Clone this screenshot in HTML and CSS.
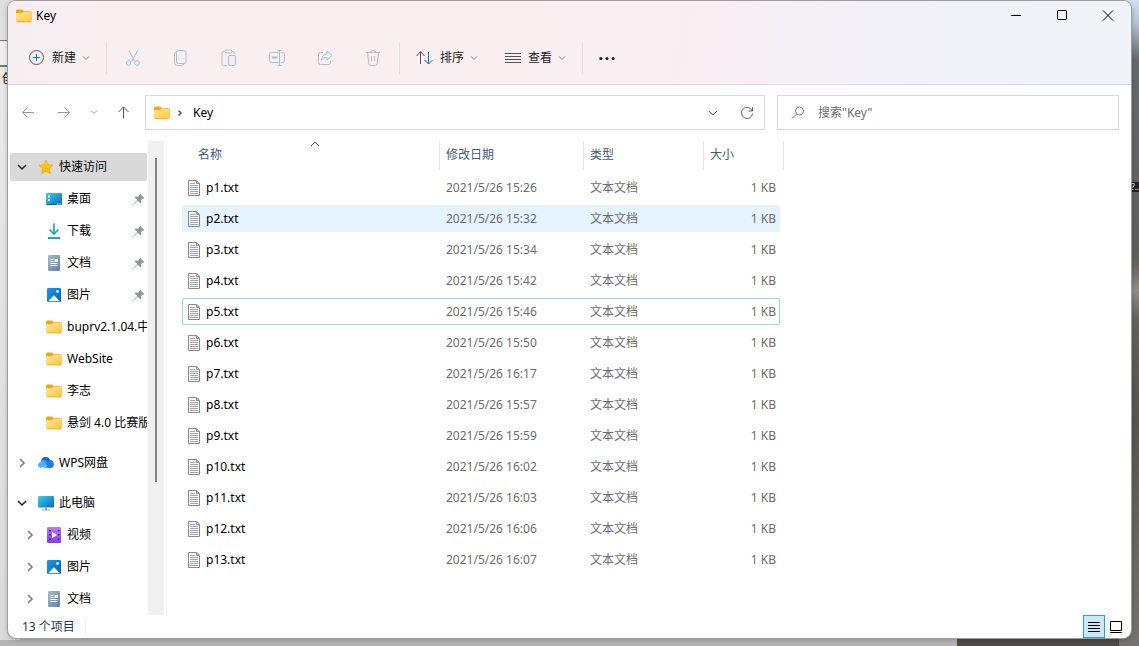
FILE: index.html
```html
<!DOCTYPE html>
<html lang="zh-CN">
<head>
<meta charset="utf-8">
<title>Key</title>
<link rel="stylesheet" href="styles.css">
</head>
<body>
<svg class="sprite" aria-hidden="true">
  <defs>
    <linearGradient id="g-folder" x1="0" y1="0" x2="1" y2="1"><stop offset="0" stop-color="#ffe69a"/><stop offset="1" stop-color="#ffc93c"/></linearGradient>
    <linearGradient id="g-screen" x1="0" y1="0" x2="1" y2="1"><stop offset="0" stop-color="#36d3ea"/><stop offset="1" stop-color="#0c66bd"/></linearGradient>
    <linearGradient id="g-star" x1="0" y1="0" x2="0" y2="1"><stop offset="0" stop-color="#ffd21f"/><stop offset="1" stop-color="#f9b806"/></linearGradient>
    <linearGradient id="g-down" x1="0" y1="0" x2="0" y2="1"><stop offset="0" stop-color="#2bc79a"/><stop offset="1" stop-color="#0b9a8a"/></linearGradient>
    <linearGradient id="g-doc" x1="0" y1="0" x2="1" y2="1"><stop offset="0" stop-color="#a9bccf"/><stop offset="1" stop-color="#64809f"/></linearGradient>
    <linearGradient id="g-pic" x1="0" y1="0" x2="1" y2="1"><stop offset="0" stop-color="#1c9de6"/><stop offset="1" stop-color="#0560b5"/></linearGradient>
    <linearGradient id="g-video" x1="0" y1="0" x2="0" y2="1"><stop offset="0" stop-color="#b57bf2"/><stop offset="1" stop-color="#8a3fe0"/></linearGradient>
  </defs>
  <symbol id="folder" viewBox="0 0 16 16"><path d="M0 3q0-1.500 1.500-1.500h4q.7 0 1.200.5l1.300 1.200h6.500q1.500 0 1.500 1.500V8H0z" fill="#f2aa0c"/><path d="M0 6q0-1 1-1h5l1.500-1.300h7q1.500 0 1.500 1.300v7q0 1-1 1H1q-1 0-1-1z" fill="url(#g-folder)"/><path d="M.3 13.300q.2.900 1 .9h13.400q.8 0 1-.9z" fill="#e5a013"/></symbol>
  <symbol id="chev" viewBox="0 0 8 8"><path d="M1 2.500l3 3 3-3" fill="none" stroke="currentColor"/></symbol>
  <symbol id="chev-down" viewBox="0 0 10 10"><path d="M1 3l4 4 4-4" fill="none" stroke="currentColor" stroke-width="1.500"/></symbol>
  <symbol id="chev-right" viewBox="0 0 10 10"><path d="M3 1l4 4-4 4" fill="none" stroke="currentColor" stroke-width="1.500"/></symbol>
  <symbol id="crumb-right" viewBox="0 0 10 10"><path d="M3.500 2.500L6 5 3.500 7.500" fill="none" stroke="currentColor" stroke-width="1.500"/></symbol>
  <symbol id="star" viewBox="0 0 16 16"><path d="M8 1.200l2.100 4.500 4.900.6-3.600 3.400.9 4.900L8 12.200l-4.300 2.400.9-4.900L1 6.300l4.900-.6z" fill="url(#g-star)" stroke="#f5a80a" stroke-width=".8" stroke-linejoin="round"/></symbol>
  <symbol id="desktop" viewBox="0 0 16 16"><rect y="2" width="16" height="12" rx="1" fill="url(#g-screen)"/><path d="M2 4.500h2v2H2zM2 8h2v2H2z" fill="#e9fbff"/><path d="M1 13h9v1H1z" fill="#0d5aa8"/><path d="M11 12.500h1.500v1H11zM13.300 12.500h1.500v1h-1.500z" fill="#c7eaff"/></symbol>
  <symbol id="download" viewBox="0 0 16 16"><path d="M8 .5v10M3.500 6.500L8 11l4.500-4.500" fill="none" stroke="#16b095" stroke-width="1.700"/><path d="M2 14h12v2H2z" fill="url(#g-down)"/></symbol>
  <symbol id="document" viewBox="0 0 16 16"><rect x="2" width="12" height="16" rx="1.200" fill="url(#g-doc)"/><path d="M4.500 4.500h3M4.500 6.500h3M4.500 8.500h7M4.500 10.500h7" stroke="#fff"/><rect x="8.500" y="4" width="3.300" height="3" fill="#fff"/></symbol>
  <symbol id="picture" viewBox="0 0 16 16"><rect x="1" y="1" width="14" height="14" rx="1.200" fill="url(#g-pic)"/><path d="M2 14.300L7.200 9q.8-.8 1.600 0l5.200 5.300z" fill="#f5faff"/><circle cx="11.500" cy="4.500" r="1.400" fill="#d9f3ff"/></symbol>
  <symbol id="video" viewBox="0 0 16 16"><rect x="1" width="14" height="16" rx="1.200" fill="url(#g-video)"/><path d="M3 3h2v1.500H3zM3 7h2v1.500H3zM3 11.500h2V13H3zM12 3h1.500v1.500H12zM12 7h1.500v1.500H12zM12 11.500h1.500V13H12z" fill="#4d2087"/><path d="M6 4.700v6.600L11 8z" fill="#fff"/></symbol>
  <symbol id="pc" viewBox="0 0 16 16"><rect y="1" width="16" height="11.500" rx=".8" fill="url(#g-screen)"/><path d="M7 12.500h2V15H7zM4 14.500h8v1H4z" fill="#94a4b0"/></symbol>
  <symbol id="cloud" viewBox="0 0 16 16"><path d="M3 6a4.800 4.800 0 0 1 9.300-.6L8 10z" fill="#1465e0"/><path d="M2.800 5.200Q6 3.800 8.500 6.500l4.800 6.500H5z" fill="#35a2ff"/><path d="M11 5.200a4 4 0 0 1 1.500 8q-1.800-.3-5.300-3.400z" fill="#1e7af3"/><path d="M3.500 6.500Q.3 7 0 10.300.3 13 3 13.200q2-.2 5.500-3.400Q6 6.500 3.500 6.500z" fill="#4bb2ff"/><path d="M3 13.200q3.300-.1 5.700-3" fill="none" stroke="#fff" stroke-width=".7"/></symbol>
  <symbol id="pin" viewBox="0 0 12 12"><path d="M7 .5L11.500 5l-1 .5-.7-.1-1.700 1.900.2 2.200-.9.900L4.700 7.700.8 11.400l-.5.100.1-.6 3.900-3.900L1.700 4.300l.9-.9 2.400.2 1.800-1.600L6.500 1z" fill="#8c98a2"/></symbol>
  <symbol id="txt" viewBox="0 0 12 16"><path d="M.5.500h8l3 3v12H.5z" fill="#fafafa" stroke="#888"/><path d="M8.500.5v3h3" fill="none" stroke="#888"/><path d="M2 3.500h5M2 5.500h8M2 7.500h8M2 9.500h8M2 11.500h8M2 13.500h8" stroke="#a5a5a5"/></symbol>
</svg>
<div class="wall-side"><span class="peek-left">创</span></div>
<div class="wall-side wall-right"><span class="peek-right">?..</span></div>

<main class="window">
  <header class="chrome">
    <div class="titlebar">
      <svg class="i16"><use href="#folder"/></svg>
      <span class="title">Key</span>
      <button class="winbtn" aria-label="最小化"><svg class="i12" viewBox="0 0 12 12"><path d="M1 5.500h10"/></svg></button>
      <button class="winbtn" aria-label="最大化"><svg class="i12" viewBox="0 0 12 12"><rect x="1.500" y=".5" width="9" height="9" rx=".6"/></svg></button>
      <button class="winbtn" aria-label="关闭"><svg class="i12" viewBox="0 0 12 12"><path d="M1 .5l10 10M11 .5L1 10.500"/></svg></button>
    </div>
    <div class="toolbar">
      <button class="cmd"><svg class="i18" viewBox="0 0 18 18"><circle cx="8.500" cy="8.500" r="7" stroke="#5a5a5a"/><path d="M5 8.500h7M8.500 5v7" stroke="#0078d4"/></svg>新建<svg class="i8"><use href="#chev"/></svg></button>
      <span class="sep"></span>
      <div class="tools">
        <button class="tool" aria-label="剪切" disabled><svg class="i18" viewBox="0 0 18 18"><path d="M5 1.500l5.700 11M13.500 1.500l-5.700 11"/><circle class="blue" cx="4.500" cy="14" r="2.300"/><circle class="blue" cx="13" cy="14" r="2.300"/></svg></button>
        <button class="tool" aria-label="复制" disabled><svg class="i18" viewBox="0 0 18 18"><path d="M4 3Q2.500 3.500 2.500 5v8.500q0 3 3 3h4q1.800 0 2.300-1.500"/><rect class="blue" x="4.500" y="1.500" width="9.500" height="13" rx="2"/></svg></button>
        <button class="tool" aria-label="粘贴" disabled><svg class="i18" viewBox="0 0 18 18"><path d="M5 2.500H3.500q-1.500 0-1.500 1.500v11q0 1.500 1.500 1.500H7M12 2.500h1Q14.500 2.500 14.500 4.500"/><rect x="5" y="1" width="7" height="3" rx="1.500"/><rect class="blue" x="8.500" y="6.500" width="7" height="10" rx="1.300"/></svg></button>
        <button class="tool" aria-label="重命名" disabled><svg class="i18" viewBox="0 0 18 18"><path d="M10.500 3.500H3.500q-2 0-2 2v6q0 2 2 2h7M13 3.500q3.500-.3 3.500 2v6q0 2.300-3.500 2"/><path class="blue" d="M9.500 1.500h4M9.500 16.500h4M11.500 1.500v15"/><path class="blue" d="M4 8.500h5.500" stroke-width="2"/></svg></button>
        <button class="tool" aria-label="共享" disabled><svg class="i18" viewBox="0 0 18 18"><path d="M7 3.500H4.500q-2 0-2 2v8q0 2 2 2h8q2 0 2-2V12"/><path class="blue" d="M11 2l5 4.500-5 4.500V8.500q-3.500-.3-5.500 2.500.5-5.500 5.500-6z"/></svg></button>
        <button class="tool" aria-label="删除" disabled><svg class="i18" viewBox="0 0 18 18"><path d="M2 3.500h14M6.500 3.500q0-2 2.500-2t2.500 2M3.500 3.500l1.300 11.200q.2 1.800 2 1.800h4.400q1.800 0 2-1.800L14.500 3.500M7.500 7v5.500M10.500 7v5.500"/></svg></button>
      </div>
      <span class="sep"></span>
      <button class="cmd"><svg class="i18" viewBox="0 0 18 18"><path d="M4.500 15V3M.5 7l4-4.500 4 4.500" stroke="#555"/><path d="M12.500 3v12M8.500 11l4 4 4-4" stroke="#0078d4"/></svg>排序<svg class="i8"><use href="#chev"/></svg></button>
      <button class="cmd"><svg class="i18" viewBox="0 0 18 18"><path d="M1 4.500h16M1 7.500h16M1 10.500h16M1 13.500h16" stroke="#555"/></svg>查看<svg class="i8"><use href="#chev"/></svg></button>
      <span class="sep"></span>
      <button class="cmd" aria-label="查看更多"><svg class="i18" viewBox="0 0 18 18"><g fill="#1b1b1b" stroke="none"><circle cx="1.800" cy="9.500" r="1.500"/><circle cx="8" cy="9.500" r="1.500"/><circle cx="14.200" cy="9.500" r="1.500"/></g></svg></button>
    </div>
  </header>

  <nav class="navbar" aria-label="导航">
    <button class="navbtn" aria-label="返回"><svg class="i14" viewBox="0 0 14 14"><path d="M13 6.500H1.500M6.500 1.500l-5 5 5 5"/></svg></button>
    <button class="navbtn" aria-label="前进"><svg class="i14" viewBox="0 0 14 14"><path d="M1 6.500h11.500M7.500 1.500l5 5-5 5"/></svg></button>
    <button class="navbtn slim" aria-label="最近浏览的位置"><svg class="i8" viewBox="0 0 8 8"><path d="M1 1.500l3 3 3-3"/></svg></button>
    <button class="navbtn dark" aria-label="上移"><svg class="i14" viewBox="0 0 14 14"><path d="M6.500 12.500V1M1.500 6l5-5 5 5"/></svg></button>
    <div class="address">
      <svg class="i16"><use href="#folder"/></svg>
      <svg class="i10 crumb-chev"><use href="#crumb-right"/></svg>
      <a class="crumb" href="#">Key</a>
      <button class="addrbtn" aria-label="以前的位置"><svg class="i10" viewBox="0 0 10 10"><path d="M1 3l4 4 4-4"/></svg></button>
      <button class="addrbtn" aria-label="刷新"><svg class="i14" viewBox="0 0 14 14"><path d="M12.300 5a5.600 5.600 0 1 0 .3 2.500M12.500 1v4h-4"/></svg></button>
    </div>
    <label class="search">
      <svg class="i14" viewBox="0 0 14 14"><circle cx="8.500" cy="5" r="4"/><path d="M5.600 7.900L1 12.500"/></svg>
      <input type="text" aria-label="搜索" placeholder="搜索&quot;Key&quot;">
    </label>
  </nav>

  <div class="content">
    <aside class="sidebar">
      <div class="tree">
        <section class="group">
          <a class="node root selected" href="#"><svg class="i10 open"><use href="#chev-down"/></svg><svg class="i16"><use href="#star"/></svg><span>快速访问</span></a>
          <a class="node" href="#"><i class="i10"></i><svg class="i16"><use href="#desktop"/></svg><span>桌面</span><svg class="i12"><use href="#pin"/></svg></a>
          <a class="node" href="#"><i class="i10"></i><svg class="i16"><use href="#download"/></svg><span>下载</span><svg class="i12"><use href="#pin"/></svg></a>
          <a class="node" href="#"><i class="i10"></i><svg class="i16"><use href="#document"/></svg><span>文档</span><svg class="i12"><use href="#pin"/></svg></a>
          <a class="node" href="#"><i class="i10"></i><svg class="i16"><use href="#picture"/></svg><span>图片</span><svg class="i12"><use href="#pin"/></svg></a>
          <a class="node" href="#"><i class="i10"></i><svg class="i16"><use href="#folder"/></svg><span>buprv2.1.04.中</span></a>
          <a class="node" href="#"><i class="i10"></i><svg class="i16"><use href="#folder"/></svg><span>WebSite</span></a>
          <a class="node" href="#"><i class="i10"></i><svg class="i16"><use href="#folder"/></svg><span>李志</span></a>
          <a class="node" href="#"><i class="i10"></i><svg class="i16"><use href="#folder"/></svg><span>悬剑 4.0 比赛版</span></a>
        </section>
        <section class="group">
          <a class="node root" href="#"><svg class="i10"><use href="#chev-right"/></svg><svg class="i16"><use href="#cloud"/></svg><span>WPS网盘</span></a>
        </section>
        <section class="group">
          <a class="node root" href="#"><svg class="i10 open"><use href="#chev-down"/></svg><svg class="i16"><use href="#pc"/></svg><span>此电脑</span></a>
          <a class="node" href="#"><svg class="i10"><use href="#chev-right"/></svg><svg class="i16"><use href="#video"/></svg><span>视频</span></a>
          <a class="node" href="#"><svg class="i10"><use href="#chev-right"/></svg><svg class="i16"><use href="#picture"/></svg><span>图片</span></a>
          <a class="node" href="#"><svg class="i10"><use href="#chev-right"/></svg><svg class="i16"><use href="#document"/></svg><span>文档</span></a>
        </section>
      </div>
      <div class="track"><div class="thumb"></div></div>
    </aside>

    <section class="files">
      <table>
        <colgroup><col class="c-name"><col class="c-date"><col class="c-type"><col class="c-size"><col class="c-end"></colgroup>
        <thead>
          <tr><th class="sorted">名称<svg class="i10 caret" viewBox="0 0 10 10"><path d="M1 7l4-4 4 4"/></svg></th><th>修改日期</th><th>类型</th><th colspan="2">大小</th></tr>
        </thead>
        <tbody>
          <tr><td><svg class="file"><use href="#txt"/></svg>p1.txt</td><td>2021/5/26 15:26</td><td>文本文档</td><td>1 KB</td></tr>
          <tr class="hover"><td><svg class="file"><use href="#txt"/></svg>p2.txt</td><td>2021/5/26 15:32</td><td>文本文档</td><td>1 KB</td></tr>
          <tr><td><svg class="file"><use href="#txt"/></svg>p3.txt</td><td>2021/5/26 15:34</td><td>文本文档</td><td>1 KB</td></tr>
          <tr><td><svg class="file"><use href="#txt"/></svg>p4.txt</td><td>2021/5/26 15:42</td><td>文本文档</td><td>1 KB</td></tr>
          <tr class="focus"><td><svg class="file"><use href="#txt"/></svg>p5.txt</td><td>2021/5/26 15:46</td><td>文本文档</td><td>1 KB</td></tr>
          <tr><td><svg class="file"><use href="#txt"/></svg>p6.txt</td><td>2021/5/26 15:50</td><td>文本文档</td><td>1 KB</td></tr>
          <tr><td><svg class="file"><use href="#txt"/></svg>p7.txt</td><td>2021/5/26 16:17</td><td>文本文档</td><td>1 KB</td></tr>
          <tr><td><svg class="file"><use href="#txt"/></svg>p8.txt</td><td>2021/5/26 15:57</td><td>文本文档</td><td>1 KB</td></tr>
          <tr><td><svg class="file"><use href="#txt"/></svg>p9.txt</td><td>2021/5/26 15:59</td><td>文本文档</td><td>1 KB</td></tr>
          <tr><td><svg class="file"><use href="#txt"/></svg>p10.txt</td><td>2021/5/26 16:02</td><td>文本文档</td><td>1 KB</td></tr>
          <tr><td><svg class="file"><use href="#txt"/></svg>p11.txt</td><td>2021/5/26 16:03</td><td>文本文档</td><td>1 KB</td></tr>
          <tr><td><svg class="file"><use href="#txt"/></svg>p12.txt</td><td>2021/5/26 16:06</td><td>文本文档</td><td>1 KB</td></tr>
          <tr><td><svg class="file"><use href="#txt"/></svg>p13.txt</td><td>2021/5/26 16:07</td><td>文本文档</td><td>1 KB</td></tr>
        </tbody>
      </table>
    </section>
  </div>

  <footer class="status">
    <span class="count">13 个项目</span>
    <button class="view active" aria-label="详细信息"><svg class="i12" viewBox="0 0 12 12"><path d="M0 1.500h12M0 4.500h12M0 7.500h12M0 10.500h12"/></svg></button>
    <button class="view" aria-label="大缩略图"><svg class="i12" viewBox="0 0 12 12"><path d="M.5.500h11v9H.5zM0 11.500h12"/></svg></button>
  </footer>
</main>
</body>
</html>
```

FILE: styles.css
```css
* { box-sizing: border-box; }

body {
  margin: 0;
  height: 100vh;
  padding: 1px 8px 8px;
  font: 12px/16px "Noto Sans", "Noto Sans CJK SC", sans-serif;
  color: #000;
  background: linear-gradient(90deg, #b4b4b4 84%, #4e4a44 84%);
  overflow: hidden;
}

button, input { font: inherit; color: inherit; }
button { border: 0; background: none; padding: 0; }
a { color: inherit; text-decoration: none; }
svg { flex: none; fill: none; stroke: currentColor; }
symbol { stroke: none; }
.sprite { position: absolute; width: 0; height: 0; }
.i8 { width: 8px; height: 8px; }
.i10 { width: 10px; height: 10px; }
.i12 { width: 12px; height: 12px; }
.i14 { width: 14px; height: 14px; }
.i16 { width: 16px; height: 16px; stroke: none; }
.i18 { width: 18px; height: 18px; }

/* Desktop strips behind the window */
.wall-side {
  position: absolute;
  top: 0;
  left: 0;
  bottom: 6px;
  width: 20px;
  background: linear-gradient(#dedede 40px, #777 40px, #777 41px, #eee 41px, #eee 65px, #777 65px, #777 67px, #e9e9e9 67px, #dadada);
}
.wall-right {
  left: auto;
  right: 0;
  bottom: 0;
  background: linear-gradient(#d3def3, #b5bfd2 24px, #66676a 60px, #5e5e5d 250px, #66625d 265px, #928d84 290px, #63605a 320px, #57544d 420px, #75736f);
}
.peek-left { position: absolute; left: 2px; top: 71px; }
.peek-right { position: absolute; right: 0; top: 182px; color: #fff; background: #222; font-size: 8px; line-height: 10px; }

.window {
  position: relative;
  height: 100%;
  display: flex;
  flex-direction: column;
  background: #fff;
  border-radius: 8px;
  box-shadow: 0 0 0 1px #9d9d9f, 0 1px 5px rgba(0, 0, 0, .3);
  overflow: hidden;
}

.chrome {
  border-bottom: 1px solid #dfdbe0;
  background: linear-gradient(100deg, #f6eff2 0%, #f9eff0 16%, #f9eef1 58%, #f3f1f7 74%, #f0f3f8 92%);
}
.titlebar { display: flex; align-items: center; height: 29px; padding-left: 8px; }
.title { flex: 1; margin-left: 4px; }
.winbtn { width: 46px; height: 29px; display: grid; place-items: center; }

.toolbar { display: flex; align-items: center; height: 54px; padding: 2px 0 0 7px; }
.cmd { display: flex; align-items: center; gap: 6px; height: 32px; padding: 0 13px; color: #1b1b1b; }
.cmd .i8 { color: #888; }
.sep { width: 1px; height: 31px; margin: 0 3px; background: #e5dfe1; }
.tools { display: flex; gap: 16px; padding: 0 7px; }
.tool { width: 32px; height: 32px; display: grid; place-items: center; color: #bdb8ba; }
.blue { stroke: #98c4ea; }

.navbar { display: flex; align-items: center; padding: 10px 12px 11px 2px; }
.navbtn { width: 36px; height: 32px; display: grid; place-items: center; color: #999; }
.slim { width: 24px; }
.dark { color: #555; }
.address {
  flex: 610 1 0;
  display: flex;
  align-items: center;
  height: 35px;
  padding: 0 0 0 8px;
  margin-left: 3px;
  border: 1px solid #d9d9d9;
}
.crumb-chev { margin: 0 8px 0 5px; color: #555; }
.crumb { flex: 1; }
.addrbtn { width: 34px; height: 33px; display: grid; place-items: center; color: #666; }
.search {
  flex: 314 1 0;
  display: flex;
  align-items: center;
  gap: 13px;
  height: 35px;
  margin-left: 12px;
  padding: 0 13px;
  border: 1px solid #d9d9d9;
  color: #777;
}
.search input { flex: 1; min-width: 0; border: 0; padding: 0; outline: 0; background: none; }
.search input::placeholder { color: #6d6d6d; opacity: 1; }

.content { flex: 1; min-height: 0; display: flex; }
.sidebar { flex: none; display: flex; width: 159px; border-right: 1px solid #f6f6f6; }
.tree { width: 140px; padding: 12px 1px 0 2px; overflow: hidden; }
.group { display: flex; flex-direction: column; gap: 4px; margin-bottom: 12px; }
.node { display: flex; align-items: center; height: 28px; padding: 0 2px 0 15px; color: #000; white-space: nowrap; overflow: hidden; }
.root { padding-left: 7px; }
.node .i10 { flex: none; margin-right: 11px; color: #777; }
.node .open { color: #222; }
.node span { flex: 1; margin-left: 5px; }
.node .i12 { stroke: none; }
.selected { background: #d9d9d9; border-radius: 2px; }
.track { width: 16px; padding-top: 17px; background: #f0f0f0; }
.thumb { width: 2px; height: 71%; margin-left: 7px; background: #858585; }

.files { flex: 1; min-width: 0; overflow: hidden; padding-left: 15px; }
table { table-layout: fixed; width: 602px; border-collapse: separate; border-spacing: 0 4px; margin-top: -4px; }
.c-name { width: 258px; }
.c-date { width: 144px; }
.c-type { width: 120px; }
.c-size { width: 76px; }
.c-end { width: 4px; }
th {
  position: relative;
  height: 29px;
  padding: 0 6px 2px;
  text-align: left;
  font-weight: 400;
  color: #44597a;
  border-right: 1px solid #e5e5e5;
}
.sorted { padding-left: 16px; }
.caret { position: absolute; left: 128px; top: -2px; color: #555; }
td { height: 27px; padding: 0 6px; color: #6d6d6d; white-space: nowrap; }
td:first-child { color: #000; border-radius: 2px 0 0 2px; }
td:nth-child(4) { padding-right: 4px; text-align: right; border-radius: 0 2px 2px 0; }
.file { width: 12px; height: 16px; margin-right: 6px; vertical-align: top; stroke: none; }
.hover td { background: #e5f3ff; }
.focus td { border: solid #99d1ff; border-width: 1px 0; }
.focus td:first-child { border-left-width: 1px; padding-left: 5px; }
.focus td:last-child { border-right-width: 1px; padding-right: 3px; }

.status { display: flex; align-items: center; height: 23px; padding: 0 4px 0 14px; color: #1e395b; }
.count { padding-right: 10px; border-right: 1px solid #eee; margin-right: auto; }
.view { width: 22px; height: 23px; display: grid; place-items: center; color: #000; }
.active { background: #cce8f6; border: 1px solid #26a0da; }
```
